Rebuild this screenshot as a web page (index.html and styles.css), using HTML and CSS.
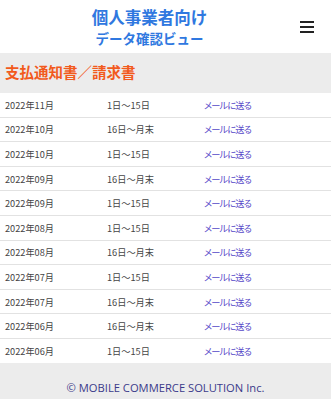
FILE: index.html
```html
<!DOCTYPE html>
<html lang="ja">
<head>
<meta charset="utf-8">
<meta name="viewport" content="width=device-width, initial-scale=1">
<title>個人事業者向けデータ確認ビュー</title>
<link rel="stylesheet" href="styles.css">
</head>
<body>
  <header class="site-header">
    <div class="site-title">
      <div class="title-main">個人事業者向け</div>
      <div class="title-sub">データ確認ビュー</div>
    </div>
    <button class="menu-btn" type="button" aria-label="メニュー">
      <span></span><span></span><span></span>
    </button>
  </header>

  <h1 class="page-heading">支払通知書／請求書</h1>

  <table class="docs">
    <tbody>
      <tr><td>2022年11月</td><td>1日～15日</td><td><a href="#">メールに送る</a></td></tr>
      <tr><td>2022年10月</td><td>16日～月末</td><td><a href="#">メールに送る</a></td></tr>
      <tr><td>2022年10月</td><td>1日～15日</td><td><a href="#">メールに送る</a></td></tr>
      <tr><td>2022年09月</td><td>16日～月末</td><td><a href="#">メールに送る</a></td></tr>
      <tr><td>2022年09月</td><td>1日～15日</td><td><a href="#">メールに送る</a></td></tr>
      <tr><td>2022年08月</td><td>1日～15日</td><td><a href="#">メールに送る</a></td></tr>
      <tr><td>2022年08月</td><td>16日～月末</td><td><a href="#">メールに送る</a></td></tr>
      <tr><td>2022年07月</td><td>1日～15日</td><td><a href="#">メールに送る</a></td></tr>
      <tr><td>2022年07月</td><td>16日～月末</td><td><a href="#">メールに送る</a></td></tr>
      <tr><td>2022年06月</td><td>16日～月末</td><td><a href="#">メールに送る</a></td></tr>
      <tr><td>2022年06月</td><td>1日～15日</td><td><a href="#">メールに送る</a></td></tr>
    </tbody>
  </table>

  <footer class="site-footer">© MOBILE COMMERCE SOLUTION Inc.</footer>
</body>
</html>
```

FILE: styles.css
```css
body {
    margin: 0;
    background: #ffffff;
    font-family: "Noto Sans CJK JP", "Noto Sans", sans-serif;
    color: #444444;
}

.site-header {
    display: flex;
    align-items: center;
    height: 53px;
}

.site-title {
    flex: 1;
    padding: 1px 0 0 8px;
    text-align: center;
    color: #2f78e0;
    font-weight: bold;
}

.title-main {
    font-size: 16.5px;
    line-height: 21px;
}

.title-sub {
    font-size: 13.5px;
    line-height: 20px;
}

.menu-btn {
    width: 32px;
    height: 32px;
    margin-right: 8px;
    padding: 0 9px;
    border: none;
    background: none;
    display: flex;
    flex-direction: column;
    justify-content: center;
    gap: 3px;
}

.menu-btn span {
    display: block;
    height: 2px;
    background: #222222;
}

.page-heading {
    margin: 0;
    height: 40px;
    padding: 0 5px;
    background: #ececec;
    color: #f25a1c;
    font-size: 14.5px;
    font-weight: bold;
    line-height: 38px;
}

.docs {
    width: 100%;
    border-collapse: collapse;
    font-size: 9.2px;
}

.docs td {
    height: 23.6px;
    padding: 0 5px;
    border-bottom: 1px solid #e2e2e2;
}

.docs tr:last-child td {
    border-bottom: none;
}

.docs td:nth-child(1) {
    width: 92px;
}

.docs td:nth-child(2) {
    width: 87px;
}

.docs a {
    color: #5548c8;
    text-decoration: none;
    font-feature-settings: "palt";
    letter-spacing: -0.8px;
}

.site-footer {
    margin-bottom: 5px;
    padding: 18px 0 5px;
    background: #ececec;
    text-align: center;
    color: #3b3a8a;
    font-family: "Open Sans", "Noto Sans", sans-serif;
    font-size: 11.2px;
    line-height: 13px;
}
```
